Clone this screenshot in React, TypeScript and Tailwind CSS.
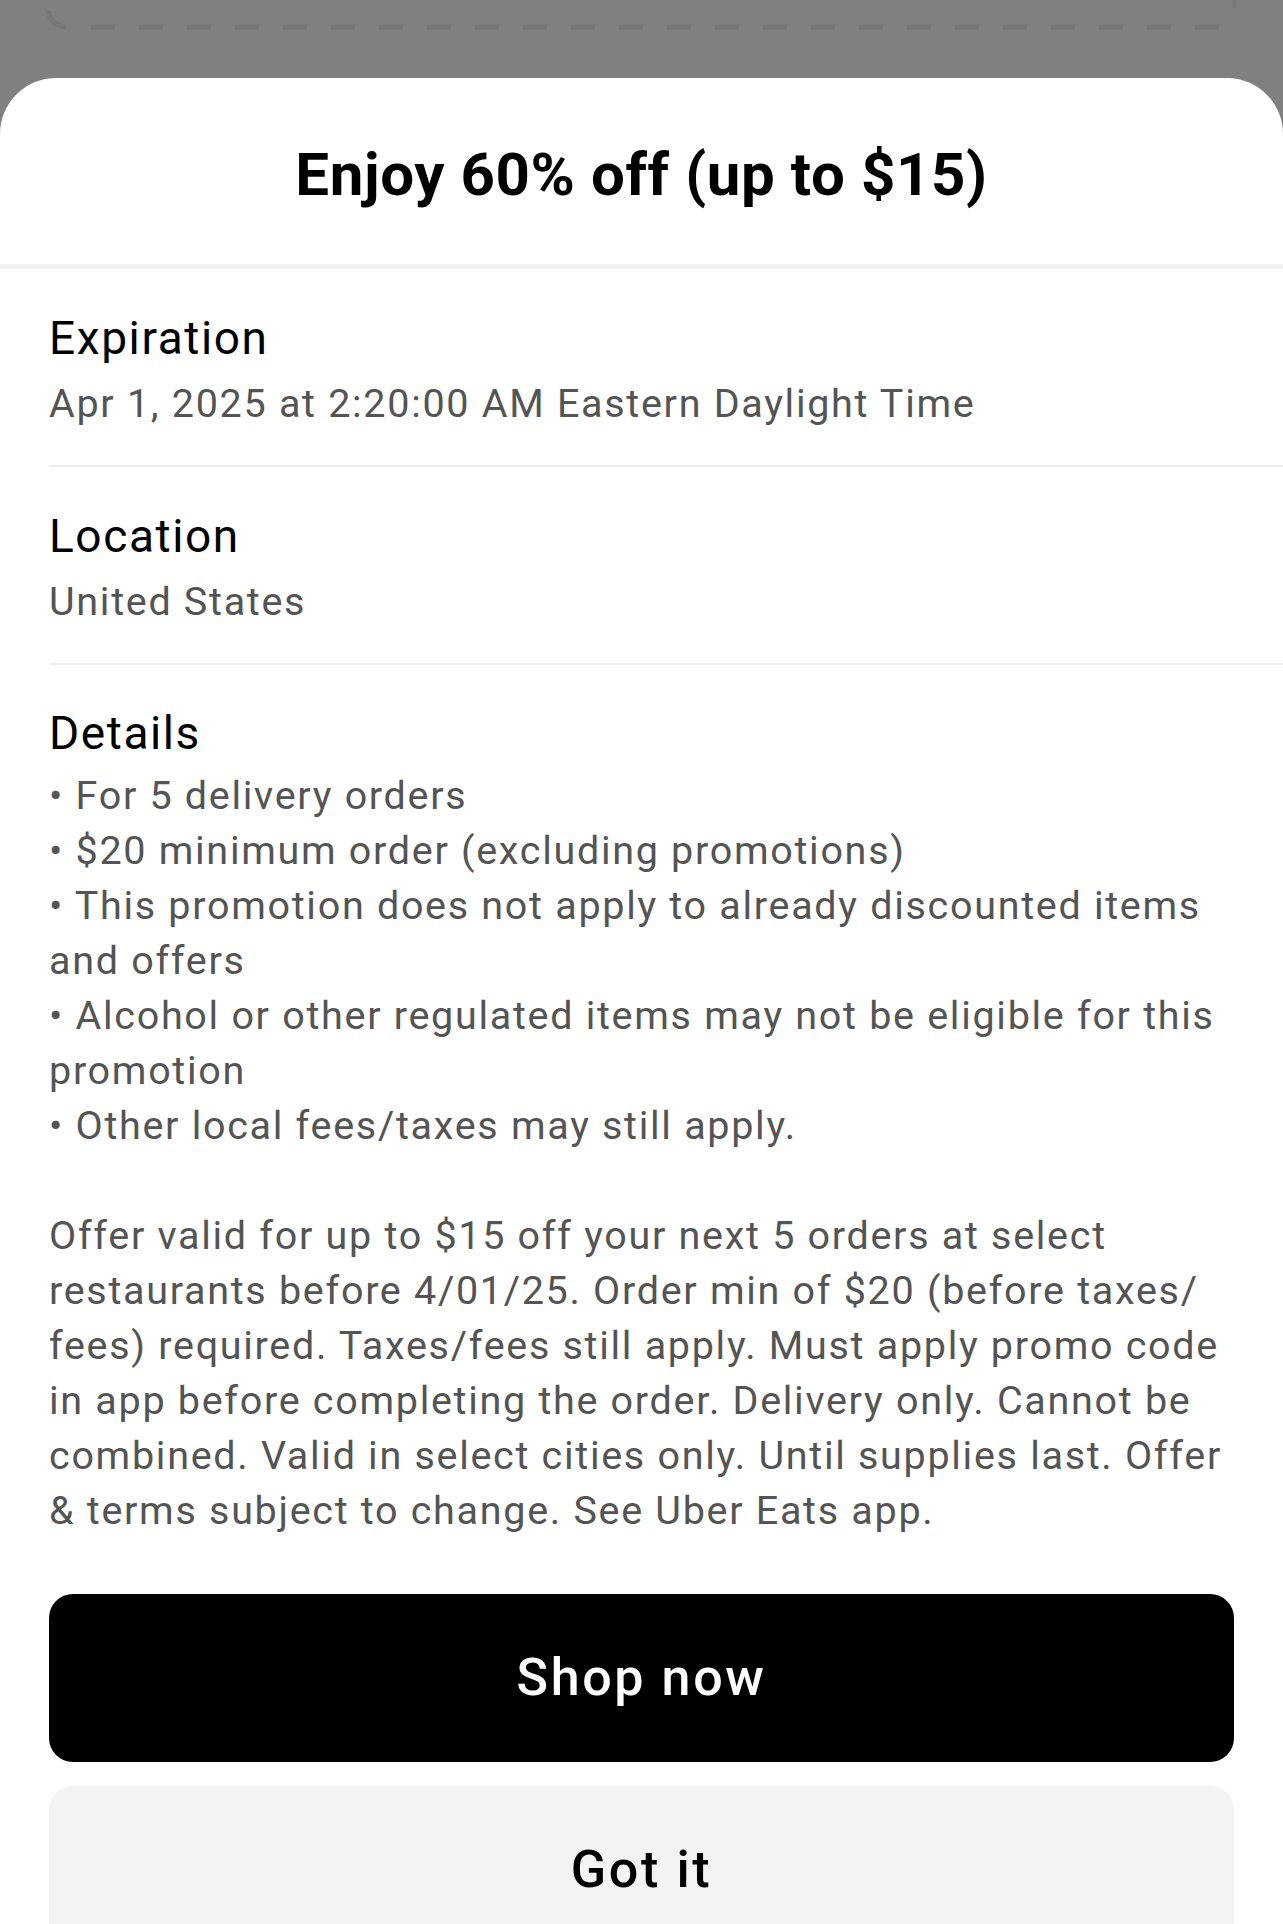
import React from "react";

const bodyLines: string[] = [
  "• For 5 delivery orders",
  "• $20 minimum order (excluding promotions)",
  "• This promotion does not apply to already discounted items",
  "and offers",
  "• Alcohol or other regulated items may not be eligible for this",
  "promotion",
  "• Other local fees/taxes may still apply.",
  "",
  "Offer valid for up to $15 off your next 5 orders at select",
  "restaurants before 4/01/25. Order min of $20 (before taxes/",
  "fees) required. Taxes/fees still apply. Must apply promo code",
  "in app before completing the order. Delivery only. Cannot be",
  "combined. Valid in select cities only. Until supplies last. Offer",
  "& terms subject to change. See Uber Eats app.",
];

function Backdrop() {
  const dashes = Array.from({ length: 24 }, (_, i) => 91 + i * 48);
  return (
    <div className="h-[78px] w-full bg-[#808080]">
      <svg width="1283" height="78" viewBox="0 0 1283 78" className="block">
        <path d="M48.5 11 Q50 25 66 27" stroke="#777777" strokeWidth="5" fill="none" />
        {dashes.map((x) => (
          <rect key={x} x={x} y={24.5} width={24} height={5} fill="#777777" />
        ))}
        <rect x={1232.5} y={0} width={4} height={8} fill="#777777" />
      </svg>
    </div>
  );
}

function Section({ label, value, divider }: { label: string; value: string; divider: boolean }) {
  return (
    <div className="pl-[49px]">
      <div className="pt-[41px] pb-[34px] pr-[49px]">
        <div className="text-[46px] leading-[56px] tracking-[1.6px] text-black">{label}</div>
        <div className="mt-[10px] text-[39.5px] leading-[55px] tracking-[1.7px] text-[#545454] whitespace-nowrap">
          {value}
        </div>
      </div>
      {divider && <div className="h-[2px] bg-[#eeeeee]" />}
    </div>
  );
}

export default function App() {
  return (
    <div className="h-[1924px] w-[1283px] overflow-hidden bg-[#808080] font-[Roboto,sans-serif]">
      <Backdrop />
      <div className="h-[1846px] w-full rounded-t-[56px] bg-white">
        <div className="flex h-[186px] justify-center pt-[62px]">
          <h1 className="text-[60px] font-bold leading-[70px] tracking-[0.6px] text-black">
            Enjoy 60% off (up to $15)
          </h1>
        </div>
        <div className="h-[5px] bg-[#f3f3f3]" />
        <Section label="Expiration" value="Apr 1, 2025 at 2:20:00 AM Eastern Daylight Time" divider />
        <Section label="Location" value="United States" divider />
        <div className="px-[49px] pt-[40px]">
          <div className="text-[46px] leading-[56px] tracking-[1.6px] text-black">Details</div>
          <div className="mt-[7px] text-[39.5px] leading-[55px] tracking-[1.7px] text-[#545454]">
            {bodyLines.map((l, i) => (
              <div key={i} className="h-[55px] whitespace-nowrap">
                {l}
              </div>
            ))}
          </div>
          <div className="mt-[56px] flex flex-col gap-[24px]">
            <button className="flex h-[168px] w-full items-center justify-center rounded-[24px] bg-black text-[52px] font-medium tracking-[2.6px] text-white">
              Shop now
            </button>
            <button className="flex h-[168px] w-full items-center justify-center rounded-[24px] bg-[#f3f3f3] text-[52px] font-medium tracking-[2.6px] text-black">
              Got it
            </button>
          </div>
        </div>
      </div>
    </div>
  );
}
